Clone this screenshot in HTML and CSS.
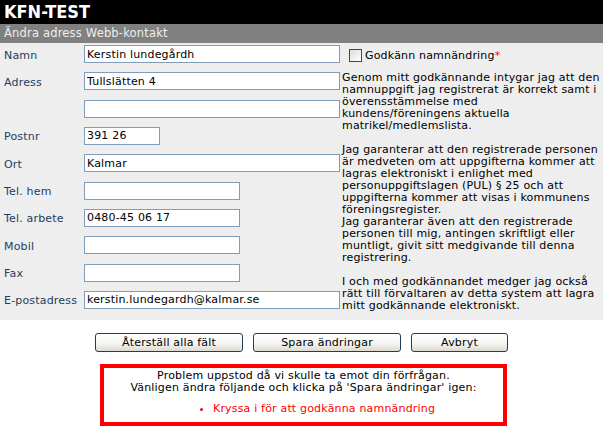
FILE: index.html
```html
<!DOCTYPE html>
<html lang="sv">
<head>
<meta charset="utf-8">
<title>KFN-TEST</title>
<link rel="stylesheet" href="styles.css">
</head>
<body>
<div class="header">KFN-TEST</div>
<div class="subheader">Ändra adress Webb-kontakt</div>
<div class="panel">
  <div class="form">
    <div class="row"><span class="lbl">Namn</span><input class="inp wide" type="text" value="Kerstin lundegårdh"></div>
    <div class="row"><span class="lbl">Adress</span><input class="inp wide" type="text" value="Tullslätten 4"></div>
    <div class="row"><span class="lbl"></span><input class="inp wide" type="text" value=""></div>
    <div class="row"><span class="lbl">Postnr</span><input class="inp short" type="text" value="391 26"></div>
    <div class="row"><span class="lbl">Ort</span><input class="inp wide" type="text" value="Kalmar"></div>
    <div class="row"><span class="lbl">Tel. hem</span><input class="inp medium" type="text" value=""></div>
    <div class="row"><span class="lbl">Tel. arbete</span><input class="inp medium" type="text" value="0480-45 06 17"></div>
    <div class="row"><span class="lbl">Mobil</span><input class="inp medium" type="text" value=""></div>
    <div class="row"><span class="lbl">Fax</span><input class="inp medium" type="text" value=""></div>
    <div class="row"><span class="lbl">E-postadress</span><input class="inp wide" type="text" value="kerstin.lundegardh@kalmar.se"></div>
  </div>
  <div class="info">
    <div class="approve"><span class="cb"></span><span class="approve-text">Godkänn namnändring</span><span class="req">*</span></div>
    <p class="terms">Genom mitt godkännande intygar jag att den<br>namnuppgift jag registrerat är korrekt samt i<br>överensstämmelse med<br>kundens/föreningens aktuella<br>matrikel/medlemslista.</p>
    <p class="terms">Jag garanterar att den registrerade personen<br>är medveten om att uppgifterna kommer att<br>lagras elektroniskt i enlighet med<br>personuppgiftslagen (PUL) § 25 och att<br>uppgifterna kommer att visas i kommunens<br>föreningsregister.<br>Jag garanterar även att den registrerade<br>personen till mig, antingen skriftligt eller<br>muntligt, givit sitt medgivande till denna<br>registrering.</p>
    <p class="terms">I och med godkännandet medger jag också<br>rätt till förvaltaren av detta system att lagra<br>mitt godkännande elektroniskt.</p>
  </div>
</div>
<div class="buttons">
  <button class="btn btn-wide" type="button">Återställ alla fält</button>
  <button class="btn btn-wide" type="button">Spara ändringar</button>
  <button class="btn btn-small" type="button">Avbryt</button>
</div>
<div class="error">
  <div class="error-msg">Problem uppstod då vi skulle ta emot din förfrågan.<br>Vänligen ändra följande och klicka på 'Spara ändringar' igen:</div>
  <ul class="error-list">
    <li>Kryssa i för att godkänna namnändring</li>
  </ul>
</div>
</body>
</html>
```

FILE: styles.css
```css
body {
  margin: 0;
  background: #fff;
  font-family: "DejaVu Sans", Verdana, sans-serif;
  font-size: 11px;
  letter-spacing: 0.18px;
  color: #000;
}

.header {
  background: #000;
  color: #fff;
  height: 24px;
  line-height: 24px;
  padding-left: 4px;
  font-family: "DejaVu Sans Condensed", "DejaVu Sans", sans-serif;
  font-stretch: condensed;
  font-weight: bold;
  font-size: 18px;
  letter-spacing: 0;
}

.subheader {
  background: #808080;
  color: #eeeeee;
  height: 19px;
  line-height: 19px;
  padding-left: 4px;
  font-size: 11.5px;
}

.panel {
  background: #eeeeee;
  display: flex;
  align-items: flex-start;
  padding: 2px 0 11px 4px;
}

.form {
  width: 336px;
  display: flex;
  flex-direction: column;
  gap: 9.33px;
}

.row {
  display: flex;
  align-items: center;
  height: 18px;
}

.lbl {
  width: 80px;
  padding-top: 2px;
  color: #1e3d5f;
}

.inp {
  box-sizing: border-box;
  height: 18px;
  margin: 0;
  border: 1px solid #7f9db9;
  background: #fff;
  padding: 0 2px;
  font-family: inherit;
  font-size: 11px;
  letter-spacing: 0.18px;
  color: #000;
  outline: none;
}

.wide { width: 256px; }
.medium { width: 156px; }
.short { width: 76px; }

.info {
  margin-left: 2px;
  margin-bottom: -3px;
  width: 261px;
}

.approve {
  display: flex;
  align-items: center;
  height: 13px;
  margin: 4px 0 0 7px;
}

.cb {
  box-sizing: border-box;
  width: 13px;
  height: 13px;
  border: 1px solid #1c5180;
  background: linear-gradient(135deg, #dcdcd7, #ffffff);
  margin-right: 3px;
}

.approve-text {
  line-height: 13px;
}

.req {
  color: #ff0000;
}

.terms {
  margin: 12px 0 0;
  line-height: 12px;
  white-space: nowrap;
}

.approve + .terms {
  margin-top: 10px;
}

.buttons {
  display: flex;
  justify-content: center;
  gap: 10px;
  margin-top: 13px;
}

.btn {
  box-sizing: border-box;
  height: 19px;
  padding: 0;
  border: 1px solid #1f3c63;
  border-radius: 3px;
  background: linear-gradient(#ffffff, #f5f5f1 55%, #dcd9cf);
  font-family: inherit;
  font-size: 11px;
  letter-spacing: 0.18px;
  color: #000;
}

.btn-wide { width: 148px; }
.btn-small { width: 97px; }

.error {
  box-sizing: border-box;
  width: 407px;
  height: 62px;
  margin: 12px 0 0 100px;
  border: 4px solid #ff0000;
  padding-top: 2px;
}

.error-msg {
  text-align: center;
  line-height: 12px;
}

.error-list {
  margin: 9px 0 0;
  padding-left: 109px;
  line-height: 12px;
  color: #ff0000;
}
```
